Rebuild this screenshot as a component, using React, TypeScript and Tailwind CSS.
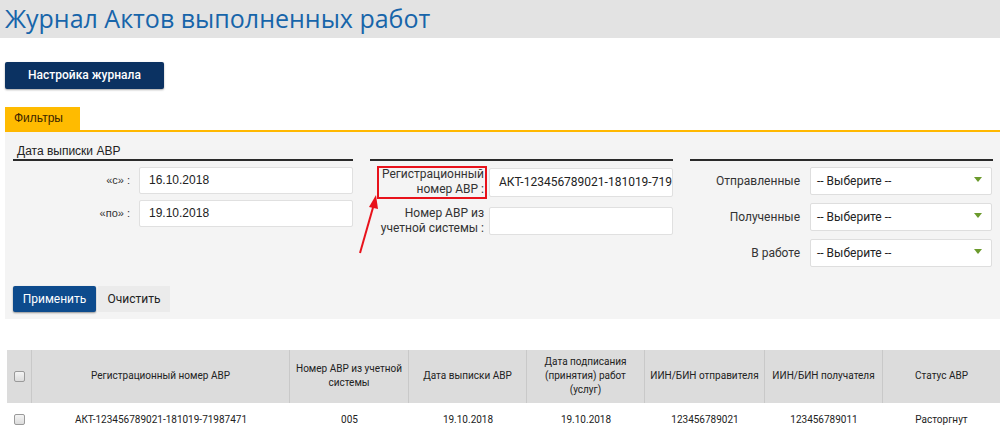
import React from 'react';

const roboto = { fontFamily: 'Roboto, "Liberation Sans", sans-serif' };

const Checkbox: React.FC = () => (
  <span className="inline-block w-[11px] h-[11px] rounded-[2px] border border-[#9a9a9a] bg-gradient-to-b from-[#f4f4f4] to-[#dcdcdc]" />
);

const SelectBox: React.FC = () => (
  <div className="relative w-[182px] h-[28px] bg-white border border-[#dedede] rounded-[2px] flex items-center pl-[6px] text-[12px] text-[#222] font-['Roboto',sans-serif]">
    -- Выберите --
    <span className="absolute right-[9px] top-[9px] w-0 h-0 border-l-[4px] border-r-[4px] border-t-[5px] border-l-transparent border-r-transparent border-t-[#6b9a2c]" />
  </div>
);

const headers = [
  'Регистрационный номер АВР',
  'Номер АВР из учетной системы',
  'Дата выписки АВР',
  'Дата подписания (принятия) работ (услуг)',
  'ИИН/БИН отправителя',
  'ИИН/БИН получателя',
  'Статус АВР',
];
const widths = ['w-[258px]', 'w-[119px]', 'w-[118px]', 'w-[118px]', 'w-[120px]', 'w-[118px]', 'w-[117px]'];
const row = ['АКТ-123456789021-181019-71987471', '005', '19.10.2018', '19.10.2018', '123456789021', '123456789011', 'Расторгнут'];

const App: React.FC = () => {
  return (
    <div className="relative w-[1000px] h-[436px] overflow-hidden bg-white">
      <div className="h-[38px] bg-[#e3e3e3] pl-[5px] pt-[3px]">
        <h1 className="text-[25px] leading-[30px] text-[#1765aa] font-['Open_Sans',sans-serif]">Журнал Актов выполненных работ</h1>
      </div>

      <div className="pl-[5px] pt-[23px]">
        <button className="w-[159px] h-[27px] bg-[#0b3262] text-white text-[12px] font-medium rounded-[2px] shadow-[0_1px_2px_rgba(0,0,0,0.35)]" style={roboto}>
          Настройка журнала
        </button>
      </div>

      <div className="ml-[5px] mt-[18px]">
        <div className="flex border-b-2 border-[#ffb800]">
          <div className="w-[75px] h-[23px] bg-[#ffbb00] flex items-center pl-[9px] text-[12px] text-[#3b2500] font-['Liberation_Sans',sans-serif]">Фильтры</div>
        </div>

        <div className="bg-[#f4f4f4] pl-[8px] pr-[7px] pt-[11px] pb-[7px]">
          <div className="flex gap-[17px]">
            {/* column 1 */}
            <div className="w-[340px]">
              <div className="h-[18px] border-b-2 border-[#2a2a2a] pl-[4px] text-[12px] leading-[16px] text-[#222] font-['Liberation_Sans',sans-serif]">Дата выписки АВР</div>
              <div className="flex flex-col gap-[6px] pt-[6px] font-['Liberation_Sans',sans-serif]">
                <div className="flex items-center gap-[9px]">
                  <span className="w-[117px] text-right text-[11px] text-[#333]">«с» :</span>
                  <div className="w-[214px] h-[27px] bg-white border border-[#e0e0e0] rounded-[2px] flex items-center pl-[9px] text-[12px] text-[#222]">16.10.2018</div>
                </div>
                <div className="flex items-center gap-[9px]">
                  <span className="w-[117px] text-right text-[11px] text-[#333]">«по» :</span>
                  <div className="w-[214px] h-[27px] bg-white border border-[#e0e0e0] rounded-[2px] flex items-center pl-[9px] text-[12px] text-[#222]">19.10.2018</div>
                </div>
              </div>
            </div>

            {/* column 2 */}
            <div className="w-[303px]" style={roboto}>
              <div className="h-[18px] border-b-2 border-[#2a2a2a]" />
              <div className="flex flex-col gap-[7px] pt-[5px]">
                <div className="flex items-center gap-[2px]">
                  <div className="ml-[7px] w-[110px] h-[33px] border-2 border-[#e8121b] flex flex-col items-end justify-center pr-[1px] text-[12px] leading-[15px] text-[#333]">
                    <span>Регистрационный</span>
                    <span>номер АВР :</span>
                  </div>
                  <div className="w-[184px] h-[29px] bg-white border border-[#e0e0e0] rounded-[2px] flex items-center pl-[9px] text-[12px] text-[#222] overflow-hidden whitespace-nowrap">АКТ-123456789021-181019-7198</div>
                </div>
                <div className="flex items-center gap-[2px]">
                  <div className="w-[117px] flex flex-col items-end pr-[3px] text-[12px] leading-[15px] text-[#333]">
                    <span>Номер АВР из</span>
                    <span className="whitespace-nowrap">учетной системы :</span>
                  </div>
                  <div className="w-[184px] h-[28px] bg-white border border-[#e0e0e0] rounded-[2px]" />
                </div>
              </div>
            </div>

            {/* column 3 */}
            <div className="w-[303px]" style={roboto}>
              <div className="h-[18px] border-b-2 border-[#2a2a2a]" />
              <div className="flex flex-col gap-[8px] pt-[6px]">
                {['Отправленные', 'Полученные', 'В работе'].map((l) => (
                  <div key={l} className="flex items-center gap-[10px]">
                    <span className="w-[110px] text-right text-[12px] text-[#333]">{l}</span>
                    <SelectBox />
                  </div>
                ))}
              </div>
            </div>
          </div>

          <div className="flex gap-[2px] mt-[19px]" style={roboto}>
            <button className="w-[83px] h-[26px] bg-[#0d4b8d] text-white text-[12px] rounded-[2px] shadow-[0_1px_2px_rgba(0,0,0,0.4)]">Применить</button>
            <button className="w-[72px] h-[26px] bg-[#ebebeb] text-[#222] text-[12px]">Очистить</button>
          </div>
        </div>
      </div>

      <div className="ml-[7px] mt-[31px] text-[10px] text-[#222]" style={roboto}>
        <div className="flex h-[53px] bg-[#dcdcdc]">
          <div className="w-[25px] flex items-center justify-center border-r border-[#c9c9c9]">
            <Checkbox />
          </div>
          {headers.map((h, i) => (
            <div key={h} className={`${widths[i]} flex items-center justify-center text-center px-[2px] leading-[14px] ${i < headers.length - 1 ? 'border-r border-[#c9c9c9]' : ''}`}>
              {h}
            </div>
          ))}
        </div>
        <div className="flex h-[34px] bg-white">
          <div className="w-[25px] flex items-center justify-center">
            <Checkbox />
          </div>
          {row.map((c, i) => (
            <div key={i} className={`${widths[i]} flex items-center justify-center`}>{c}</div>
          ))}
        </div>
      </div>

      <svg className="absolute left-[355px] top-[192px]" width="30" height="66" viewBox="0 0 30 66">
        <line x1="5" y1="61" x2="19" y2="12" stroke="#e8121b" strokeWidth="2" />
        <polygon points="21,3 14,15 23,17" fill="#e8121b" />
      </svg>
    </div>
  );
};

export default App;
